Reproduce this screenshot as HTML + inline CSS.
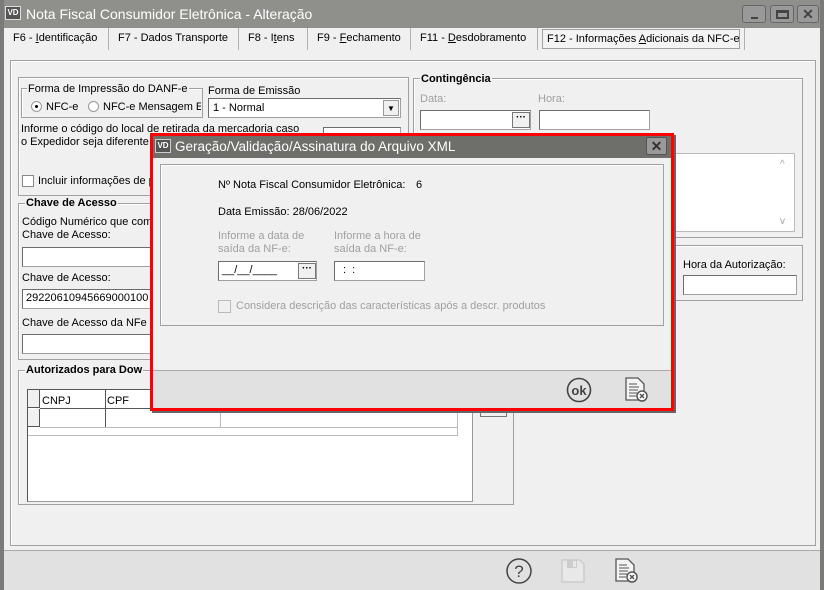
<!DOCTYPE html>
<html><head><meta charset="utf-8"><style>
*{box-sizing:border-box;margin:0;padding:0}
body{width:824px;height:590px;position:relative;overflow:hidden;background:#f0f0f0;font-family:"Liberation Sans",sans-serif;font-size:11px;color:#000}
.a{position:absolute}
.gb{position:absolute;border:1px solid #a0a0a0;box-shadow:inset 1px 1px 0 #fff}
.lg{position:absolute;background:#f0f0f0;padding:0 1px;line-height:14px;white-space:nowrap}
.ed{position:absolute;background:#fff;border:1px solid #a0a0a0;border-top-color:#6d6d6d;border-left-color:#6d6d6d;white-space:nowrap}
.t{position:absolute;white-space:nowrap;line-height:14px}
.gray{color:#a0a0a0}
.dots{position:absolute;width:18px;height:16px;background:#f0f0f0;border:1px solid #777;font-weight:bold;font-size:10px;text-align:center;line-height:9px}
.tab{position:absolute;top:28px;height:22px;line-height:20px;border-right:1px solid #b0b0b0;padding-left:9px;font-size:11px;white-space:nowrap}
</style></head><body>
<div class="a" style="left:0;top:0;width:824px;height:28px;background:#8f8f8b"></div>
<div class="a" style="left:0;top:0;width:4px;height:590px;background:#7a7a78"></div>
<div class="a" style="left:820px;top:0;width:4px;height:590px;background:#7a7a78"></div>
<div class="a" style="left:5px;top:6px;width:16px;height:14px;background:#555;color:#fff;font-size:8px;font-weight:bold;text-align:center;line-height:12px;border:1px solid #ddd">VD</div>
<div class="t" style="left:26px;top:6px;font-size:14px;line-height:17px;color:#fff">Nota Fiscal Consumidor Eletrônica - Alteração</div>
<div class="a" style="left:742px;top:5px;width:24px;height:18px;border:1px solid #666;border-radius:3px;background:#999"><div class="a" style="left:8px;top:11px;width:7px;height:2px;background:#444"></div></div>
<div class="a" style="left:770px;top:5px;width:24px;height:18px;border:1px solid #666;border-radius:3px;background:#999"><div class="a" style="left:5px;top:4px;width:13px;height:9px;border:2px solid #444;border-top-width:3px"></div></div>
<div class="a" style="left:797px;top:5px;width:22px;height:18px;border:1px solid #666;border-radius:3px;background:#999;color:#444;font-weight:bold;font-size:14px;text-align:center;line-height:16px">✕</div>
<div class="tab" style="left:4px;width:105px">F6 - <u>I</u>dentificação</div>
<div class="tab" style="left:109px;width:130px">F7 - Dados Transporte</div>
<div class="tab" style="left:239px;width:69px">F8 - I<u>t</u>ens</div>
<div class="tab" style="left:308px;width:103px">F9 - <u>F</u>echamento</div>
<div class="tab" style="left:411px;width:127px">F11 - <u>D</u>esdobramento</div>
<div class="a" style="left:542px;top:29px;width:198px;height:20px;border:1px solid #a0a0a0;background:#f4f4f4;line-height:18px;padding-left:4px;font-size:11px;white-space:nowrap;overflow:hidden">F12 - Informações <u>A</u>dicionais da NFC-e</div>
<div class="a" style="left:744px;top:28px;width:1px;height:22px;background:#b0b0b0"></div>
<div class="gb" style="left:10px;top:60px;width:806px;height:486px"></div>
<div class="gb" style="left:18px;top:77px;width:391px;height:119px"></div>
<div class="gb" style="left:21px;top:88px;width:182px;height:30px"></div>
<div class="lg" style="left:27px;top:82px">Forma de Impressão do DANF-e</div>
<div class="a" style="left:31px;top:101px;width:11px;height:11px;border-radius:50%;border:1px solid #999;background:#fff"><div class="a" style="left:3px;top:3px;width:3px;height:3px;background:#000;border-radius:50%"></div></div>
<div class="t" style="left:46px;top:100px">NFC-e</div>
<div class="a" style="left:88px;top:101px;width:11px;height:11px;border-radius:50%;border:1px solid #999;background:#fff"></div>
<div class="t" style="left:103px;top:100px;width:98px;overflow:hidden">NFC-e Mensagem El</div>
<div class="t" style="left:208px;top:84px">Forma de Emissão</div>
<div class="ed" style="left:208px;top:98px;width:193px;height:20px;padding-left:4px;line-height:18px">1 - Normal</div>
<div class="a" style="left:383px;top:100px;width:16px;height:16px;background:#f0f0f0;border:1px solid #999;font-size:8px;text-align:center;line-height:15px">▼</div>
<div class="t" style="left:21px;top:122px">Informe o código do local de retirada da mercadoria caso</div>
<div class="t" style="left:21px;top:135px">o Expedidor seja diferente</div>
<div class="ed" style="left:323px;top:127px;width:78px;height:20px"></div>
<div class="a" style="left:22px;top:175px;width:12px;height:12px;border:1px solid #888;background:#fff"></div>
<div class="t" style="left:38px;top:174px">Incluir informações de p</div>
<div class="gb" style="left:18px;top:203px;width:160px;height:157px"></div>
<div class="lg" style="left:25px;top:196px;font-weight:bold">Chave de Acesso</div>
<div class="t" style="left:22px;top:215px">Código Numérico que comp</div>
<div class="t" style="left:22px;top:228px">Chave de Acesso:</div>
<div class="ed" style="left:22px;top:247px;width:140px;height:20px"></div>
<div class="t" style="left:22px;top:271px">Chave de Acesso:</div>
<div class="ed" style="left:22px;top:289px;width:140px;height:20px;padding-left:3px;line-height:17px;overflow:hidden">29220610945669000100</div>
<div class="t" style="left:22px;top:316px">Chave de Acesso da NFe R</div>
<div class="ed" style="left:22px;top:334px;width:140px;height:20px"></div>
<div class="gb" style="left:18px;top:370px;width:496px;height:135px"></div>
<div class="lg" style="left:25px;top:363px;font-weight:bold">Autorizados para Dow</div>
<div class="a" style="left:27px;top:389px;width:446px;height:113px;background:#fff;border:1px solid #999;border-top-color:#555;border-left-color:#555"></div>
<div class="a" style="left:28px;top:390px;width:430px;height:46px;border-right:1px solid #bbb;border-bottom:1px solid #bbb"></div>
<div class="a" style="left:28px;top:390px;width:12px;height:18px;background:#f0f0f0;border-right:1px solid #555;border-bottom:1px solid #555"></div>
<div class="a" style="left:28px;top:409px;width:12px;height:18px;background:#f0f0f0;border-right:1px solid #555;border-bottom:1px solid #555"></div>
<div class="a" style="left:40px;top:390px;width:418px;height:19px;border-bottom:1px solid #555;background:#fff"></div>
<div class="t" style="left:42px;top:394px">CNPJ</div>
<div class="a" style="left:105px;top:390px;width:1px;height:37px;background:#555"></div>
<div class="t" style="left:107px;top:394px">CPF</div>
<div class="a" style="left:220px;top:409px;width:1px;height:18px;background:#bbb"></div>
<div class="a" style="left:40px;top:427px;width:418px;height:1px;background:#bbb"></div>
<div class="a" style="left:480px;top:405px;width:27px;height:12px;background:#f0f0f0;border:1px solid #777;border-top:none"></div>
<div class="gb" style="left:413px;top:78px;width:390px;height:160px"></div>
<div class="lg" style="left:420px;top:72px;font-weight:bold">Contingência</div>
<div class="t gray" style="left:420px;top:92px">Data:</div>
<div class="t gray" style="left:538px;top:92px">Hora:</div>
<div class="ed" style="left:420px;top:110px;width:111px;height:20px"></div>
<div class="dots" style="left:512px;top:112px">···</div>
<div class="ed" style="left:539px;top:110px;width:111px;height:20px"></div>
<div class="ed" style="left:672px;top:153px;width:123px;height:79px;border-color:#bbb"></div>
<div class="t gray" style="left:780px;top:158px;font-size:10px">^</div>
<div class="t gray" style="left:780px;top:215px;font-size:10px">v</div>
<div class="gb" style="left:672px;top:245px;width:131px;height:56px"></div>
<div class="t" style="left:683px;top:258px">Hora da Autorização:</div>
<div class="ed" style="left:683px;top:275px;width:114px;height:20px"></div>
<div class="a" style="left:670px;top:275px;width:6px;height:20px;border:1px solid #777;background:#e0e0e0"></div>
<div class="a" style="left:4px;top:550px;width:816px;height:40px;background:#e1e1e1;border-top:1px solid #aaa"></div>
<svg class="a" style="left:505px;top:557px" width="28" height="28" viewBox="0 0 28 28"><circle cx="14" cy="14" r="12" fill="none" stroke="#444" stroke-width="1.5"/><text x="14" y="20" font-family="Liberation Sans" font-size="17" text-anchor="middle" fill="#444">?</text></svg>
<svg class="a" style="left:560px;top:558px" width="26" height="26" viewBox="0 0 26 26"><path d="M2 2h18l4 4v18H2z" fill="#e8e8e8" stroke="#ccc" stroke-width="1.5"/><rect x="7" y="2" width="10" height="8" fill="#ccc"/><rect x="13" y="3" width="3" height="6" fill="#e8e8e8"/></svg>
<svg class="a" style="left:614px;top:557px" width="26" height="28" viewBox="0 0 26 28"><path d="M2 2h12l6 6v16H2z" fill="#f4f4f4" stroke="#555" stroke-width="1.3"/><path d="M5 8h8M5 11h10M5 14h9M5 17h8M5 20h7" stroke="#555"/><circle cx="18" cy="20" r="5" fill="#fff" stroke="#555" stroke-width="1.5"/><path d="M16 18l4 4M20 18l-4 4" stroke="#555" stroke-width="1.5"/></svg>
<div class="a" style="left:150px;top:133px;width:524px;height:278px;border:3px solid #f00;background:#f0f0f0;box-shadow:2px 2px 0 #666"></div>
<div class="a" style="left:153px;top:136px;width:518px;height:22px;background:#6e6e6a"></div>
<div class="a" style="left:155px;top:139px;width:16px;height:14px;background:#555;color:#fff;font-size:8px;font-weight:bold;text-align:center;line-height:12px;border:1px solid #ccc">VD</div>
<div class="t" style="left:175px;top:139px;font-size:13.5px;line-height:16px;color:#fff">Geração/Validação/Assinatura do Arquivo XML</div>
<div class="a" style="left:646px;top:137px;width:21px;height:18px;background:#999;border:1px solid #555;border-radius:2px;color:#333;font-weight:bold;font-size:14px;text-align:center;line-height:16px">✕</div>
<div class="gb" style="left:160px;top:164px;width:504px;height:162px"></div>
<div class="t" style="left:218px;top:178px">Nº Nota Fiscal Consumidor Eletrônica:</div>
<div class="t" style="left:416px;top:178px">6</div>
<div class="t" style="left:218px;top:205px">Data Emissão: 28/06/2022</div>
<div class="t gray" style="left:218px;top:230px;line-height:13px">Informe a data de<br>saída da NF-e:</div>
<div class="t gray" style="left:334px;top:230px;line-height:13px">Informe a hora de<br>saída da NF-e:</div>
<div class="ed" style="left:218px;top:261px;width:99px;height:20px;padding-left:3px;line-height:16px">__/__/____</div>
<div class="dots" style="left:298px;top:263px">···</div>
<div class="ed" style="left:334px;top:261px;width:91px;height:20px;padding-left:8px;line-height:17px">: &nbsp;:</div>
<div class="a" style="left:218px;top:300px;width:13px;height:13px;border:1px solid #bbb"></div>
<div class="t gray" style="left:236px;top:299px">Considera descrição das características após a descr. produtos</div>
<div class="a" style="left:153px;top:370px;width:518px;height:38px;background:#e1e1e1;border-top:1px solid #aaa"></div>
<svg class="a" style="left:566px;top:377px" width="26" height="26" viewBox="0 0 26 26"><circle cx="13" cy="13" r="11.5" fill="none" stroke="#444" stroke-width="1.6"/><text x="13" y="18" font-family="Liberation Sans" font-weight="bold" font-size="13" text-anchor="middle" fill="#444">ok</text></svg>
<svg class="a" style="left:624px;top:376px" width="26" height="28" viewBox="0 0 26 28"><path d="M2 2h12l6 6v16H2z" fill="#f4f4f4" stroke="#555" stroke-width="1.3"/><path d="M5 8h8M5 11h10M5 14h9M5 17h8M5 20h7" stroke="#555"/><circle cx="18" cy="20" r="5" fill="#fff" stroke="#555" stroke-width="1.5"/><path d="M16 18l4 4M20 18l-4 4" stroke="#555" stroke-width="1.5"/></svg>
</body></html>
